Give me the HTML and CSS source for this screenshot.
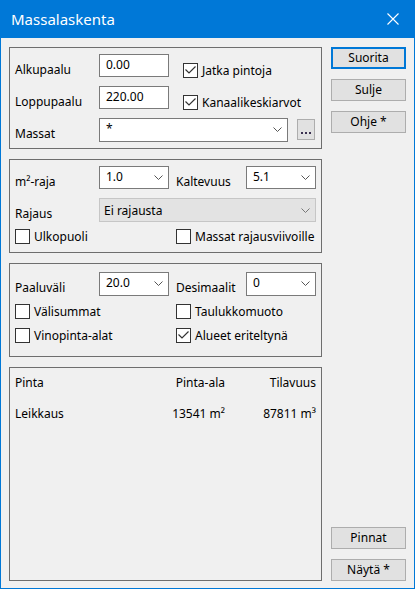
FILE: index.html
```html
<!DOCTYPE html>
<html>
<head>
<meta charset="utf-8">
<link rel="stylesheet" href="styles.css">
</head>
<body>
<div class="window">
  <div class="titlebar">
    <span class="title">Massalaskenta</span>
    <svg class="close" width="12" height="12" viewBox="0 0 12 12"><path d="M0.5 0.5L11.5 11.5M11.5 0.5L0.5 11.5" stroke="#fff" stroke-width="1.1" fill="none"/></svg>
  </div>
  <div class="content">
    <div class="left">
      <div class="group g1">
        <div class="row">
          <span class="label">Alkupaalu</span>
          <div class="input">0.00</div>
          <div class="check ml14"><svg class="box" width="15" height="15" viewBox="0 0 15 15"><rect x="0.5" y="0.5" width="14" height="14" fill="#fff" stroke="#333"/><polyline points="2.5,6.5 6,10 12.5,3.5" fill="none" stroke="#333" stroke-width="1.2"/></svg><span>Jatka pintoja</span></div>
        </div>
        <div class="row">
          <span class="label">Loppupaalu</span>
          <div class="input">220.00</div>
          <div class="check ml14"><svg class="box" width="15" height="15" viewBox="0 0 15 15"><rect x="0.5" y="0.5" width="14" height="14" fill="#fff" stroke="#333"/><polyline points="2.5,6.5 6,10 12.5,3.5" fill="none" stroke="#333" stroke-width="1.2"/></svg><span>Kanaalikeskiarvot</span></div>
        </div>
        <div class="row">
          <span class="label">Massat</span>
          <div class="combo w189 h24"><span>*</span><svg class="chev" width="9" height="5" viewBox="0 0 9 5"><polyline points="0.5,0.5 4.5,4.5 8.5,0.5" fill="none" stroke="#555" stroke-width="1"/></svg></div>
          <div class="dots"><i></i><i></i><i></i></div>
        </div>
      </div>

      <div class="group g2">
        <div class="row">
          <span class="label">m²-raja</span>
          <div class="combo w70"><span>1.0</span><svg class="chev" width="9" height="5" viewBox="0 0 9 5"><polyline points="0.5,0.5 4.5,4.5 8.5,0.5" fill="none" stroke="#555" stroke-width="1"/></svg></div>
          <span class="label2">Kaltevuus</span>
          <div class="combo w70"><span>5.1</span><svg class="chev" width="9" height="5" viewBox="0 0 9 5"><polyline points="0.5,0.5 4.5,4.5 8.5,0.5" fill="none" stroke="#555" stroke-width="1"/></svg></div>
        </div>
        <div class="row">
          <span class="label">Rajaus</span>
          <div class="combo disabled w217 h24"><span>Ei rajausta</span><svg class="chev" width="9" height="5" viewBox="0 0 9 5"><polyline points="0.5,0.5 4.5,4.5 8.5,0.5" fill="none" stroke="#777" stroke-width="1"/></svg></div>
        </div>
        <div class="checkrow cr2">
          <div class="check first"><svg class="box" width="15" height="15" viewBox="0 0 15 15"><rect x="0.5" y="0.5" width="14" height="14" fill="#fff" stroke="#333"/></svg><span>Ulkopuoli</span></div>
          <div class="check"><svg class="box" width="15" height="15" viewBox="0 0 15 15"><rect x="0.5" y="0.5" width="14" height="14" fill="#fff" stroke="#333"/></svg><span>Massat rajausviivoille</span></div>
        </div>
      </div>

      <div class="group g3">
        <div class="row">
          <span class="label">Paaluväli</span>
          <div class="combo w70 h24"><span>20.0</span><svg class="chev" width="9" height="5" viewBox="0 0 9 5"><polyline points="0.5,0.5 4.5,4.5 8.5,0.5" fill="none" stroke="#555" stroke-width="1"/></svg></div>
          <span class="label2">Desimaalit</span>
          <div class="combo w70 h24"><span>0</span><svg class="chev" width="9" height="5" viewBox="0 0 9 5"><polyline points="0.5,0.5 4.5,4.5 8.5,0.5" fill="none" stroke="#555" stroke-width="1"/></svg></div>
        </div>
        <div class="checkrow cr3a">
          <div class="check first"><svg class="box" width="15" height="15" viewBox="0 0 15 15"><rect x="0.5" y="0.5" width="14" height="14" fill="#fff" stroke="#333"/></svg><span>Välisummat</span></div>
          <div class="check"><svg class="box" width="15" height="15" viewBox="0 0 15 15"><rect x="0.5" y="0.5" width="14" height="14" fill="#fff" stroke="#333"/></svg><span>Taulukkomuoto</span></div>
        </div>
        <div class="checkrow cr3b">
          <div class="check first"><svg class="box" width="15" height="15" viewBox="0 0 15 15"><rect x="0.5" y="0.5" width="14" height="14" fill="#fff" stroke="#333"/></svg><span>Vinopinta-alat</span></div>
          <div class="check"><svg class="box" width="15" height="15" viewBox="0 0 15 15"><rect x="0.5" y="0.5" width="14" height="14" fill="#fff" stroke="#333"/><polyline points="2.5,6.5 6,10 12.5,3.5" fill="none" stroke="#333" stroke-width="1.2"/></svg><span>Alueet eriteltynä</span></div>
        </div>
      </div>

      <div class="group g4">
        <div class="table">
          <span>Pinta</span><span class="r">Pinta-ala</span><span class="r">Tilavuus</span>
          <span>Leikkaus</span><span class="r">13541 m²</span><span class="r">87811 m³</span>
        </div>
      </div>
    </div>

    <div class="right">
      <div class="btn default">Suorita</div>
      <div class="btn">Sulje</div>
      <div class="btn">Ohje *</div>
      <div class="btn push">Pinnat</div>
      <div class="btn">Näytä *</div>
    </div>
  </div>
</div>
</body>
</html>
```
FILE: styles.css
```css
* { box-sizing: border-box; }
html, body { margin: 0; padding: 0; background: #f0f0f0; }

.window {
  width: 415px;
  height: 589px;
  border: 1px solid #0078d7;
  border-top: 0;
  background: #f0f0f0;
  display: flex;
  flex-direction: column;
  font-family: "Noto Sans", sans-serif;
  font-size: 12px;
  line-height: 15px;
  color: #000;
}

.titlebar {
  height: 38px;
  background: #0078d7;
  display: flex;
  align-items: center;
  padding: 0 15px 0 10px;
  color: #fff;
}
.title { font-size: 15px; line-height: 38px; }
.close { margin-left: auto; margin-top: -1px; }

.content {
  flex: 1;
  display: flex;
  gap: 9px;
  padding: 9px 8px 7px 8px;
}

.left {
  width: 313px;
  display: flex;
  flex-direction: column;
  gap: 10px;
}

.group {
  border: 1px solid #6e6e6e;
  padding-left: 5px;
}
.g1 { height: 102px; padding-top: 6px; }
.g2 { height: 94px; padding-top: 6px; }
.g3 { height: 94px; padding-top: 8px; }
.g4 { flex: 1; padding-top: 7px; padding-right: 5px; }

.row {
  display: flex;
  align-items: flex-start;
  height: 23px;
  margin-bottom: 9px;
}
.label { width: 84px; padding-top: 8px; }
.label2 { width: 70px; margin-left: 7px; padding-top: 8px; }

.input {
  width: 70px;
  height: 23px;
  border: 1px solid #7a7a7a;
  background: #fff;
  padding: 2px 0 0 6px;
}

.combo {
  height: 23px;
  border: 1px solid #7a7a7a;
  background: #fff;
  padding: 2px 5px 0 6px;
  display: flex;
  justify-content: space-between;
  align-items: flex-start;
}
.combo .chev { margin-top: 6px; }
.combo.disabled {
  background: #e3e3e3;
  border-color: #c6c6c6;
  padding-left: 4px;
  padding-top: 4px;
}
.combo.disabled .chev { margin-top: 5px; }
.w70 { width: 70px; }
.w189 { width: 189px; }
.w217 { width: 217px; }
.h24 { height: 24px; }

.dots {
  width: 18px;
  height: 21px;
  margin-left: 9px;
  margin-top: 1px;
  border: 1px solid #adadad;
  background: #e1e1e1;
  display: flex;
  justify-content: center;
  align-items: flex-end;
  gap: 2px;
  padding-bottom: 5px;
}
.dots i {
  width: 2px;
  height: 2px;
  background: #3a3050;
}

.check {
  display: flex;
  align-items: center;
  gap: 4px;
  white-space: nowrap;
}
.ml14 { margin-left: 14px; margin-top: 9px; }
.box { flex: none; }

.checkrow { display: flex; }
.checkrow .first { width: 161px; }
.cr2 { margin-top: -1px; }
.cr3a { margin-top: 6px; }
.cr3b { margin-top: 9px; }

.table {
  display: grid;
  grid-template-columns: 90px 120px 91px;
  row-gap: 16px;
}
.table .r { text-align: right; }

.right {
  width: 75px;
  display: flex;
  flex-direction: column;
  gap: 10px;
}
.btn {
  height: 22px;
  border: 1px solid #adadad;
  background: #e1e1e1;
  text-align: center;
  line-height: 20px;
}
.btn.default {
  border: 2px solid #0078d7;
  line-height: 18px;
}
.btn.push { margin-top: auto; }
```
